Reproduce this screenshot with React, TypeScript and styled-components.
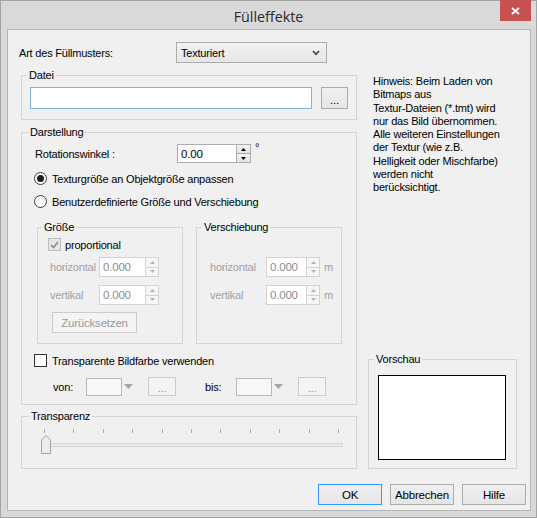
import React from "react";
import styled, { createGlobalStyle, css } from "styled-components";

const GlobalStyle = createGlobalStyle`
  html, body {
    margin: 0;
    padding: 0;
    background: #fff;
  }
  body {
    font-family: "Liberation Sans", Arial, sans-serif;
    font-size: 11px;
    letter-spacing: -0.2px;
    color: #000;
  }
  * {
    box-sizing: border-box;
  }
`;

const Window = styled.div`
  width: 537px;
  height: 518px;
  border: 1px solid #a3a3a3;
  background: #d9d9d9;
  display: flex;
  flex-direction: column;
`;

const TitleBar = styled.div`
  height: 28px;
  flex: none;
  display: grid;
  grid-template-columns: 1fr auto 1fr;
  align-items: center;
  padding: 0 5px;
`;

const Title = styled.div`
  grid-column: 2;
  font-family: "Open Sans", "Noto Sans", sans-serif;
  font-size: 14.3px;
  letter-spacing: 0;
  color: #2a2a2a;
  padding-top: 2px;
`;

const CloseButton = styled.div`
  grid-column: 3;
  justify-self: end;
  align-self: start;
  margin-top: -1px;
  width: 31px;
  height: 21px;
  background: #c75050;
  display: flex;
  align-items: center;
  justify-content: center;
`;

const Client = styled.div`
  flex: 1;
  margin: 0 5px 6px 6px;
  border: 1px solid #b5b5b5;
  background: #f0f0f0;
  padding: 12px 4px 0 13px;
  display: flex;
  flex-direction: column;
`;

const TopRow = styled.div`
  display: flex;
  align-items: center;
  height: 21px;
  margin-left: -2px;
`;

const Label = styled.span<{ $w?: number; $disabled?: boolean; $ml?: number }>`
  flex: none;
  white-space: nowrap;
  width: ${(p) => (p.$w ? `${p.$w}px` : "auto")};
  margin-left: ${(p) => p.$ml ?? 0}px;
  color: ${(p) => (p.$disabled ? "#a0a0a0" : "#000")};
`;

const Select = styled.div`
  width: 151px;
  height: 21px;
  border: 1px solid #acacac;
  background: linear-gradient(#f2f2f2, #e6e6e6);
  display: flex;
  align-items: center;
  justify-content: space-between;
  padding: 0 6px 0 4px;
`;

const Main = styled.div`
  display: grid;
  grid-template-columns: 336px 149px;
  column-gap: 11px;
  margin-top: 5px;
`;

const Column = styled.div`
  display: flex;
  flex-direction: column;
`;

const SideColumn = styled(Column)`
  justify-content: space-between;
`;

const Group = styled.fieldset<{ $h: number; $w?: number; $mt?: number }>`
  margin: ${(p) => p.$mt ?? 0}px 0 0 0;
  padding: 0;
  min-width: 0;
  border: 1px solid #d5d5d5;
  height: ${(p) => p.$h}px;
  flex: none;
  ${(p) =>
    p.$w &&
    css`
      width: ${p.$w}px;
    `}
`;

const Legend = styled.legend<{ $indent?: number }>`
  margin-left: ${(p) => p.$indent ?? 6}px;
  padding: 0 2px;
  font-size: 11px;
  line-height: 14px;
  color: #000;
`;

const GroupBody = styled.div<{ $pt: number; $pl: number; $pr?: number }>`
  padding: ${(p) => p.$pt}px ${(p) => p.$pr ?? 0}px 0 ${(p) => p.$pl}px;
  display: flex;
  flex-direction: column;
`;

const Row = styled.div<{ $mt?: number; $h?: number; $gap?: number }>`
  display: flex;
  align-items: center;
  margin-top: ${(p) => p.$mt ?? 0}px;
  height: ${(p) => (p.$h ? `${p.$h}px` : "auto")};
  gap: ${(p) => p.$gap ?? 0}px;
`;

const SubGroups = styled(Row)`
  align-items: flex-start;
  margin-left: 3px;
`;

const ColorRow = styled(Row)`
  padding-left: 19px;
`;

const TextBox = styled.div<{ $focused?: boolean }>`
  flex: 1;
  height: 22px;
  background: #fff;
  border: 1px solid ${(p) => (p.$focused ? "#7eb4ea" : "#abadb3")};
`;

const Button = styled.div<{ $w: number; $h: number; $default?: boolean; $disabled?: boolean; $ml?: number }>`
  flex: none;
  width: ${(p) => p.$w}px;
  height: ${(p) => p.$h}px;
  margin-left: ${(p) => p.$ml ?? 0}px;
  display: flex;
  align-items: center;
  justify-content: center;
  border: 1px solid
    ${(p) => (p.$default ? "#3399ff" : p.$disabled ? "#cbcbcb" : "#acacac")};
  background: ${(p) =>
    p.$disabled ? "#f4f4f4" : "linear-gradient(#f0f0f0, #e5e5e5)"};
  color: ${(p) => (p.$disabled ? "#9a9a9a" : "#000")};
  font-size: 11.5px;
`;

const Dots = styled.span`
  padding-top: 3px;
`;

/* number field with up/down buddy */
const NumWrap = styled.div<{ $h: number }>`
  display: flex;
  flex: none;
  height: ${(p) => p.$h}px;
`;

const NumEdit = styled.div<{ $w: number; $disabled?: boolean }>`
  width: ${(p) => p.$w}px;
  height: 100%;
  border: 1px solid ${(p) => (p.$disabled ? "#d3d3d3" : "#abadb3")};
  border-right: none;
  background: #fff;
  display: flex;
  align-items: center;
  padding-left: 3px;
  font-size: 11.5px;
  color: ${(p) => (p.$disabled ? "#8d8d8d" : "#000")};
`;

const Spin = styled.div<{ $w: number }>`
  width: ${(p) => p.$w}px;
  height: 100%;
  display: flex;
  flex-direction: column;
`;

const SpinBtn = styled.span<{ $disabled?: boolean }>`
  flex: 1;
  display: flex;
  align-items: center;
  justify-content: center;
  border: 1px solid ${(p) => (p.$disabled ? "#d3d3d3" : "#acacac")};
  background: ${(p) =>
    p.$disabled ? "#f6f6f6" : "linear-gradient(#f3f3f3, #e4e4e4)"};
  & + & {
    border-top: none;
  }
`;

const Degree = styled.span`
  align-self: flex-start;
  margin: -3px 0 0 4px;
`;

const Unit = styled.span`
  margin-left: 4px;
  color: #a0a0a0;
`;

const RadioMark = styled.span<{ $on?: boolean }>`
  flex: none;
  width: 13px;
  height: 13px;
  border-radius: 50%;
  border: 1px solid #3c3c3c;
  background: #fff;
  display: flex;
  align-items: center;
  justify-content: center;
  &::after {
    content: "";
    display: ${(p) => (p.$on ? "block" : "none")};
    width: 7px;
    height: 7px;
    border-radius: 50%;
    background: #1e1e1e;
  }
`;

const CheckMark = styled.span<{ $disabled?: boolean }>`
  flex: none;
  width: 13px;
  height: 13px;
  border: 1px solid ${(p) => (p.$disabled ? "#bcbcbc" : "#333")};
  background: ${(p) => (p.$disabled ? "#e6e6e6" : "#fff")};
  display: flex;
  align-items: center;
  justify-content: center;
`;

const ColorCombo = styled.div`
  flex: none;
  display: flex;
  align-items: center;
  width: 49px;
  height: 19px;
`;

const Swatch = styled.span`
  width: 36px;
  height: 18px;
  border: 1px solid #b9b9b9;
  background: #f7f7f7;
`;

const ArrowCell = styled.span`
  flex: 1;
  display: flex;
  justify-content: center;
`;

/* slider */
const Slider = styled.div`
  margin: 5px 0 0 19px;
  width: 302px;
`;

const Ticks = styled.div`
  display: flex;
  justify-content: space-between;
  height: 5px;
  padding: 0 4px 0 3px;
  & > span {
    width: 1px;
    height: 4px;
    margin-top: 1px;
    background: #a9a9a9;
  }
`;

const TrackArea = styled.div`
  position: relative;
  display: flow-root;
  height: 19px;
  margin-top: 2px;
`;

const Rail = styled.div`
  margin: 8px 0 0 6px;
  height: 4px;
  border: 1px solid #d6d6d6;
  background: #e7eaea;
`;

const Thumb = styled.svg`
  position: absolute;
  left: 0;
  top: 0;
`;

const Hint = styled.p`
  margin: 7px 0 0 5px;
  line-height: 13.3px;
  white-space: nowrap;
`;

const Preview = styled.div`
  margin: 9px 0 0 9px;
  width: 128px;
  height: 85px;
  border: 1px solid #000;
  background: #fff;
`;

const ButtonRow = styled.div`
  display: flex;
  justify-content: flex-end;
  gap: 8px;
  margin-top: 15px;
`;

const UpTri = ({ c }: { c: string }) => (
  <svg width="5" height="3" viewBox="0 0 5 3">
    <path d="M2.5 0 L5 3 L0 3 Z" fill={c} />
  </svg>
);

const DownTri = ({ c }: { c: string }) => (
  <svg width="5" height="3" viewBox="0 0 5 3">
    <path d="M0 0 L5 0 L2.5 3 Z" fill={c} />
  </svg>
);

const NumberField = ({
  value,
  edit,
  spin,
  h,
  disabled,
}: {
  value: string;
  edit: number;
  spin: number;
  h: number;
  disabled?: boolean;
}) => {
  const c = disabled ? "#b3b3b3" : "#000";
  return (
    <NumWrap $h={h}>
      <NumEdit $w={edit} $disabled={disabled}>
        {value}
      </NumEdit>
      <Spin $w={spin}>
        <SpinBtn $disabled={disabled}>
          <UpTri c={c} />
        </SpinBtn>
        <SpinBtn $disabled={disabled}>
          <DownTri c={c} />
        </SpinBtn>
      </Spin>
    </NumWrap>
  );
};

const ColorPicker = () => (
  <ColorCombo>
    <Swatch />
    <ArrowCell>
      <svg width="9" height="5" viewBox="0 0 9 5">
        <path d="M0 0 L9 0 L4.5 5 Z" fill="#a4a4a4" />
      </svg>
    </ArrowCell>
  </ColorCombo>
);

export default function App() {
  return (
    <>
      <GlobalStyle />
      <Window>
        <TitleBar>
          <Title>Fülleffekte</Title>
          <CloseButton>
            <svg width="9" height="8" viewBox="0 0 9 8">
              <path d="M1 1 L8 7 M8 1 L1 7" stroke="#fff" strokeWidth="1.8" />
            </svg>
          </CloseButton>
        </TitleBar>
        <Client>
          <TopRow>
            <Label $w={157}>Art des Füllmusters:</Label>
            <Select>
              <span>Texturiert</span>
              <svg width="8" height="6" viewBox="0 0 8 6">
                <path d="M1 1 L4 4.3 L7 1" fill="none" stroke="#444" strokeWidth="1.7" />
              </svg>
            </Select>
          </TopRow>

          <Main>
            <Column>
              <Group $h={52}>
                <Legend $indent={5}>Datei</Legend>
                <GroupBody $pt={5} $pl={8} $pr={8}>
                  <Row $gap={9}>
                    <TextBox $focused />
                    <Button $w={27} $h={22}>
                      <Dots>...</Dots>
                    </Button>
                  </Row>
                </GroupBody>
              </Group>

              <Group $h={280} $mt={5}>
                <Legend>Darstellung</Legend>
                <GroupBody $pt={5} $pl={12}>
                  <Row $h={19}>
                    <Label $w={142} $ml={1}>Rotationswinkel :</Label>
                    <NumberField value="0.00" edit={59} spin={15} h={19} />
                    <Degree>°</Degree>
                  </Row>
                  <Row $mt={9} $h={13} $gap={5}>
                    <RadioMark $on />
                    <Label>Texturgröße an Objektgröße anpassen</Label>
                  </Row>
                  <Row $mt={10} $h={13} $gap={5}>
                    <RadioMark />
                    <Label>Benutzerdefinierte Größe und Verschiebung</Label>
                  </Row>

                  <SubGroups $mt={12} $gap={13}>
                    <Group $h={124} $w={146}>
                      <Legend $indent={4}>Größe</Legend>
                      <GroupBody $pt={4} $pl={10}>
                        <Row $h={13} $gap={4}>
                          <CheckMark $disabled>
                            <svg width="9" height="8" viewBox="0 0 9 8">
                              <path d="M1 4 L3.5 6.5 L8 1" fill="none" stroke="#8d8d8d" strokeWidth="1.7" />
                            </svg>
                          </CheckMark>
                          <Label>proportional</Label>
                        </Row>
                        <Row $mt={6} $h={20}>
                          <Label $w={49} $ml={2} $disabled>horizontal</Label>
                          <NumberField value="0.000" edit={46} spin={14} h={20} disabled />
                        </Row>
                        <Row $mt={8} $h={20}>
                          <Label $w={49} $ml={2} $disabled>vertikal</Label>
                          <NumberField value="0.000" edit={46} spin={14} h={20} disabled />
                        </Row>
                        <Row $mt={7}>
                          <Button $w={85} $h={21} $ml={4} $disabled>
                            Zurücksetzen
                          </Button>
                        </Row>
                      </GroupBody>
                    </Group>

                    <Group $h={124} $w={146}>
                      <Legend $indent={5}>Verschiebung</Legend>
                      <GroupBody $pt={23} $pl={12}>
                        <Row $h={20}>
                          <Label $w={56} $ml={1} $disabled>horizontal</Label>
                          <NumberField value="0.000" edit={40} spin={14} h={20} disabled />
                          <Unit>m</Unit>
                        </Row>
                        <Row $mt={8} $h={20}>
                          <Label $w={56} $ml={1} $disabled>vertikal</Label>
                          <NumberField value="0.000" edit={40} spin={14} h={20} disabled />
                          <Unit>m</Unit>
                        </Row>
                      </GroupBody>
                    </Group>
                  </SubGroups>

                  <Row $mt={10} $h={13} $gap={5}>
                    <CheckMark />
                    <Label>Transparente Bildfarbe verwenden</Label>
                  </Row>
                  <ColorRow $mt={10} $h={19}>
                    <Label $w={33}>von:</Label>
                    <ColorPicker />
                    <Button $w={28} $h={19} $ml={13} $disabled>
                      <Dots>...</Dots>
                    </Button>
                    <Label $w={31} $ml={29}>bis:</Label>
                    <ColorPicker />
                    <Button $w={28} $h={19} $ml={13} $disabled>
                      <Dots>...</Dots>
                    </Button>
                  </ColorRow>
                </GroupBody>
              </Group>

              <Group $h={60} $mt={4}>
                <Legend $indent={7}>Transparenz</Legend>
                <Slider>
                  <Ticks>
                    {Array.from({ length: 11 }).map((_, i) => (
                      <span key={i} />
                    ))}
                  </Ticks>
                  <TrackArea>
                    <Rail />
                    <Thumb width="10" height="19" viewBox="0 0 10 19">
                      <path
                        d="M0.5 18.5 V5 L5 0.5 L9.5 5 V18.5 Z"
                        fill="#ececec"
                        stroke="#a5a5a5"
                      />
                    </Thumb>
                  </TrackArea>
                </Slider>
              </Group>
            </Column>

            <SideColumn>
              <Hint>
                Hinweis: Beim Laden von
                <br />
                Bitmaps aus
                <br />
                Textur-Dateien (*.tmt) wird
                <br />
                nur das Bild übernommen.
                <br />
                Alle weiteren Einstellungen
                <br />
                der Textur (wie z.B.
                <br />
                Helligkeit oder Mischfarbe)
                <br />
                werden nicht
                <br />
                berücksichtigt.
              </Hint>
              <Group $h={117}>
                <Legend $indent={5}>Vorschau</Legend>
                <Preview />
              </Group>
            </SideColumn>
          </Main>

          <ButtonRow>
            <Button $w={64} $h={21} $default>
              OK
            </Button>
            <Button $w={64} $h={21}>
              Abbrechen
            </Button>
            <Button $w={64} $h={21}>
              Hilfe
            </Button>
          </ButtonRow>
        </Client>
      </Window>
    </>
  );
}
